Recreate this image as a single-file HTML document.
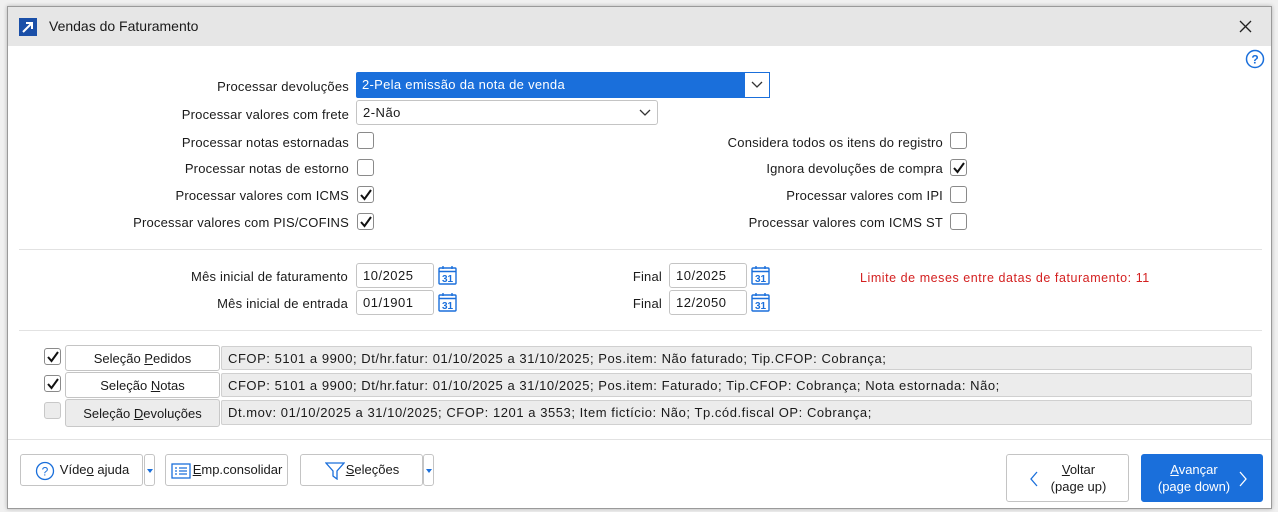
<!DOCTYPE html>
<html><head><meta charset="utf-8"><style>
*{box-sizing:border-box;margin:0;padding:0}
body{width:1278px;height:512px;background:#f0f0f0;font-family:"Liberation Sans","DejaVu Sans",sans-serif;font-size:13px;color:#1a1a1a;position:relative;overflow:hidden}
.a{position:absolute}
#win{left:7px;top:6px;width:1265px;height:503px;background:#fff;border:1px solid #9a9a9a;box-shadow:0 0 4px rgba(0,0,0,.25)}
#tb{left:0;top:0;width:100%;height:39px;background:#e6e6e6}
.lbl{position:absolute;text-align:right;white-space:nowrap;letter-spacing:.2px}
.cb{position:absolute;width:17px;height:17px;border:1px solid #8a8a8a;border-radius:3px;background:#fff}
.cb.g{background:#ececec;border-color:#c8c8c8}
.cb svg{position:absolute;left:1px;top:1px}
.inp{position:absolute;height:25px;border:1px solid #c4c4c4;border-radius:3px;background:#fff;padding:4px 6px;letter-spacing:.5px}
.sep{position:absolute;left:11px;width:1243px;height:1px;background:#e2e2e2}
.btn{position:absolute;border:1px solid #c4c4c4;border-radius:3px;background:#fff;text-align:center;white-space:nowrap}
.info{position:absolute;left:213px;width:1031px;height:24px;background:#ececec;border:1px solid #d0d0d0;border-radius:2px;padding:4px 6px;white-space:nowrap;letter-spacing:.55px}
u{text-decoration:underline}
</style></head><body>
<div id="win" class="a">
<div id="tb" class="a">
 <svg class="a" style="left:11px;top:11px" width="18" height="18"><rect width="18" height="18" fill="#1a4fa8"/><path d="M4 14L13 5M7 5h6v6" stroke="#fff" stroke-width="2" fill="none"/></svg>
 <div class="a" style="left:41px;top:11px;font-size:14px">Vendas do Faturamento</div>
 <svg class="a" style="left:1231px;top:13px" width="13" height="13"><path d="M1 1L12 12M12 1L1 12" stroke="#222" stroke-width="1.3"/></svg>
</div>
<svg class="a" style="left:1237px;top:42px" width="20" height="20"><circle cx="10" cy="10" r="8.5" stroke="#1a6fdb" stroke-width="1.5" fill="none"/><text x="10" y="14.5" font-size="12" font-weight="bold" text-anchor="middle" fill="#1a6fdb" font-family="Liberation Sans">?</text></svg>

<div class="lbl" style="right:922px;top:72px">Processar devoluções</div>
<div class="a" style="left:348px;top:65px;width:414px;height:26px;background:#1a6fdb;border-radius:2px;color:#fff;padding:5px 6px;letter-spacing:.3px">2-Pela emissão da nota de venda
 <div class="a" style="right:0;top:0;width:26px;height:26px;background:#fff;border:1px solid #1a6fdb"><svg class="a" style="left:6px;top:8px" width="12" height="8"><path d="M1 1l5 5 5-5" stroke="#333" fill="none" stroke-width="1.3"/></svg></div></div>
<div class="lbl" style="right:922px;top:100px">Processar valores com frete</div>
<div class="inp" style="left:348px;top:93px;width:302px">2-Não<svg class="a" style="left:282px;top:8px" width="12" height="8"><path d="M1 1l5 5 5-5" stroke="#333" fill="none" stroke-width="1.3"/></svg></div>

<div class="lbl" style="right:922px;top:128px">Processar notas estornadas</div>
<div class="cb" style="left:349px;top:125px"></div>
<div class="lbl" style="right:922px;top:154px">Processar notas de estorno</div>
<div class="cb" style="left:349px;top:152px"></div>
<div class="lbl" style="right:922px;top:181px">Processar valores com ICMS</div>
<div class="cb" style="left:349px;top:179px"><svg width="14" height="14"><path d="M2 7l3.5 4L12 2" stroke="#111" stroke-width="2" fill="none"/></svg></div>
<div class="lbl" style="right:922px;top:208px">Processar valores com PIS/COFINS</div>
<div class="cb" style="left:349px;top:206px"><svg width="14" height="14"><path d="M2 7l3.5 4L12 2" stroke="#111" stroke-width="2" fill="none"/></svg></div>

<div class="lbl" style="right:328px;top:128px">Considera todos os itens do registro</div>
<div class="cb" style="left:942px;top:125px"></div>
<div class="lbl" style="right:328px;top:154px">Ignora devoluções de compra</div>
<div class="cb" style="left:942px;top:152px"><svg width="14" height="14"><path d="M2 7l3.5 4L12 2" stroke="#111" stroke-width="2" fill="none"/></svg></div>
<div class="lbl" style="right:328px;top:181px">Processar valores com IPI</div>
<div class="cb" style="left:942px;top:179px"></div>
<div class="lbl" style="right:328px;top:208px">Processar valores com ICMS ST</div>
<div class="cb" style="left:942px;top:206px"></div>

<div class="sep" style="top:242px"></div>

<div class="lbl" style="right:923px;top:262px">Mês inicial de faturamento</div>
<div class="inp" style="left:348px;top:256px;width:78px">10/2025</div>
<div class="lbl" style="right:923px;top:289px">Mês inicial de entrada</div>
<div class="inp" style="left:348px;top:283px;width:78px">01/1901</div>
<div class="lbl" style="right:609px;top:262px">Final</div>
<div class="inp" style="left:661px;top:256px;width:78px">10/2025</div>
<div class="lbl" style="right:609px;top:289px">Final</div>
<div class="inp" style="left:661px;top:283px;width:78px">12/2050</div>
<svg class="a" style="left:430px;top:258px" width="19" height="20"><g fill="none" stroke="#1a6fdb" stroke-width="1.4"><rect x="1" y="3" width="17" height="16" rx="1"/><path d="M1 6.5h17M5 1v3M14 1v3"/></g><text x="9.5" y="17" font-size="10" font-weight="bold" text-anchor="middle" fill="#1a6fdb" font-family="Liberation Sans">31</text></svg>
<svg class="a" style="left:430px;top:285px" width="19" height="20"><g fill="none" stroke="#1a6fdb" stroke-width="1.4"><rect x="1" y="3" width="17" height="16" rx="1"/><path d="M1 6.5h17M5 1v3M14 1v3"/></g><text x="9.5" y="17" font-size="10" font-weight="bold" text-anchor="middle" fill="#1a6fdb" font-family="Liberation Sans">31</text></svg>
<svg class="a" style="left:743px;top:258px" width="19" height="20"><g fill="none" stroke="#1a6fdb" stroke-width="1.4"><rect x="1" y="3" width="17" height="16" rx="1"/><path d="M1 6.5h17M5 1v3M14 1v3"/></g><text x="9.5" y="17" font-size="10" font-weight="bold" text-anchor="middle" fill="#1a6fdb" font-family="Liberation Sans">31</text></svg>
<svg class="a" style="left:743px;top:285px" width="19" height="20"><g fill="none" stroke="#1a6fdb" stroke-width="1.4"><rect x="1" y="3" width="17" height="16" rx="1"/><path d="M1 6.5h17M5 1v3M14 1v3"/></g><text x="9.5" y="17" font-size="10" font-weight="bold" text-anchor="middle" fill="#1a6fdb" font-family="Liberation Sans">31</text></svg>
<div class="a" style="left:852px;top:264px;color:#d42020;font-size:12.5px;letter-spacing:.55px">Limite de meses entre datas de faturamento: 11</div>

<div class="sep" style="top:323px"></div>

<div class="cb" style="left:36px;top:341px"><svg width="14" height="14"><path d="M2 7l3.5 4L12 2" stroke="#111" stroke-width="2" fill="none"/></svg></div>
<div class="btn" style="left:57px;top:338px;width:155px;height:26px;padding-top:5px">Seleção <u>P</u>edidos</div>
<div class="info" style="top:339px">CFOP: 5101 a 9900; Dt/hr.fatur: 01/10/2025 a 31/10/2025; Pos.item: Não faturado; Tip.CFOP: Cobrança;</div>
<div class="cb" style="left:36px;top:368px"><svg width="14" height="14"><path d="M2 7l3.5 4L12 2" stroke="#111" stroke-width="2" fill="none"/></svg></div>
<div class="btn" style="left:57px;top:365px;width:155px;height:26px;padding-top:5px">Seleção <u>N</u>otas</div>
<div class="info" style="top:366px">CFOP: 5101 a 9900; Dt/hr.fatur: 01/10/2025 a 31/10/2025; Pos.item: Faturado; Tip.CFOP: Cobrança; Nota estornada: Não;</div>
<div class="cb g" style="left:36px;top:395px"></div>
<div class="btn" style="left:57px;top:392px;width:155px;height:28px;padding-top:6px;background:#ececec;border-color:#c8c8c8">Seleção <u>D</u>evoluções</div>
<div class="info" style="top:393px;height:25px">Dt.mov: 01/10/2025 a 31/10/2025; CFOP: 1201 a 3553; Item fictício: Não; Tp.cód.fiscal OP: Cobrança;</div>

<div class="sep" style="top:432px;left:0;width:1263px"></div>

<div class="btn" style="left:12px;top:447px;width:123px;height:32px;padding:7px 0 0 26px"><svg class="a" style="left:14px;top:6px" width="20" height="20"><circle cx="10" cy="10" r="8.5" stroke="#1a6fdb" stroke-width="1.3" fill="none"/><text x="10" y="14.5" font-size="12" text-anchor="middle" fill="#1a6fdb" font-family="Liberation Sans">?</text></svg>Víde<u>o</u> ajuda</div>
<div class="btn" style="left:136px;top:447px;width:11px;height:32px"><svg class="a" style="left:2px;top:14px" width="6" height="4"><path d="M0 0h6L3 4z" fill="#1a6fdb"/></svg></div>
<div class="btn" style="left:157px;top:447px;width:123px;height:32px;padding:7px 0 0 22px"><svg class="a" style="left:5px;top:8px" width="20" height="16"><rect x="1" y="1" width="18" height="14" fill="none" stroke="#1a6fdb" stroke-width="1.3"/><path d="M4 5h2M8 5h8M4 8h2M8 8h8M4 11h2M8 11h8" stroke="#1a6fdb" stroke-width="1.3"/></svg><u>E</u>mp.consolidar</div>
<div class="btn" style="left:292px;top:447px;width:123px;height:32px;padding:7px 0 0 22px"><svg class="a" style="left:24px;top:7px" width="20" height="18"><path d="M1 1h18l-7 8v8l-4-3V9z" fill="none" stroke="#1a6fdb" stroke-width="1.3"/></svg><u>S</u>eleções</div>
<div class="btn" style="left:415px;top:447px;width:11px;height:32px"><svg class="a" style="left:2px;top:14px" width="6" height="4"><path d="M0 0h6L3 4z" fill="#1a6fdb"/></svg></div>

<div class="btn" style="left:998px;top:447px;width:123px;height:48px;padding:6px 0 0 22px;line-height:17px"><svg class="a" style="left:22px;top:16px" width="10" height="16"><path d="M8 1L2 8l6 7" stroke="#1a6fdb" stroke-width="1.3" fill="none"/></svg><u>V</u>oltar<br>(page up)</div>
<div class="btn" style="left:1133px;top:447px;width:122px;height:48px;padding:6px 16px 0 0;line-height:17px;background:#1a6fdb;border-color:#1a6fdb;color:#fff"><u>A</u>vançar<br>(page down)<svg class="a" style="left:96px;top:16px" width="10" height="16"><path d="M2 1l6 7-6 7" stroke="#fff" stroke-width="1.3" fill="none"/></svg></div>
</div>
</body></html>
